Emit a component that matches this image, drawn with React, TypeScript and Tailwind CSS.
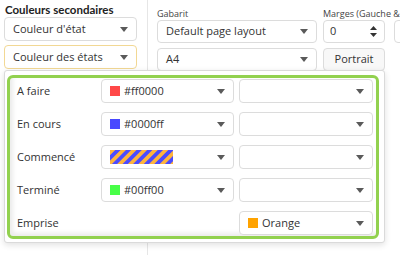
import React from 'react';

const font = { fontFamily: '"Open Sans", "Noto Sans", Arial, sans-serif' };

function Caret({ className = '' }: { className?: string }) {
  return (
    <svg width="8" height="5" viewBox="0 0 8 5" className={className}>
      <path d="M0 0h8L4 5z" fill="#5a5a5a" />
    </svg>
  );
}

function Select({
  children,
  className = '',
  focus = false,
}: {
  children?: React.ReactNode;
  className?: string;
  focus?: boolean;
}) {
  return (
    <div
      className={`flex items-center rounded-[4px] border bg-white pl-2 pr-[8px] ${
        focus ? 'border-[#f2d894]' : 'border-[#dcdcdc]'
      } ${className}`}
    >
      <div className="flex min-w-0 flex-1 items-center gap-[4px] whitespace-nowrap text-[11px] text-[#333]">
        {children}
      </div>
      <Caret />
    </div>
  );
}

function Swatch({ color }: { color: string }) {
  return <span className="h-[10px] w-[10px] shrink-0" style={{ background: color }} />;
}

function Stripes() {
  return (
    <svg width="63" height="14" viewBox="0 0 63 14" className="block">
      <defs>
        <pattern id="stripes" width="7.5" height="10" patternUnits="userSpaceOnUse" patternTransform="rotate(45)">
          <rect width="3.75" height="10" fill="#ffb43c" />
        </pattern>
      </defs>
      <rect width="63" height="14" fill="#4b4bff" />
      <rect width="63" height="14" fill="url(#stripes)" />
    </svg>
  );
}

const rows = [
  { label: 'A faire', swatch: '#ff4848', value: '#ff0000' },
  { label: 'En cours', swatch: '#4848ff', value: '#0000ff' },
  { label: 'Commencé', stripes: true },
  { label: 'Terminé', swatch: '#48ff48', value: '#00ff00' },
];

export default function App() {
  return (
    <div className="relative h-[255px] w-[400px] overflow-hidden bg-white" style={font}>
      <div className="flex h-full">
        {/* left: secondary colours */}
        <div className="flex w-[148px] shrink-0 flex-col border-r border-[#e6e6e6] pl-1 pr-[10px] pt-[2px]">
          <div
            className="whitespace-nowrap pl-px text-[11.5px] font-bold leading-[16px] text-[#222]"
            style={{ fontFamily: 'Lato, "Open Sans", sans-serif' }}
          >
            Couleurs secondaires
          </div>
          <Select className="mt-[-1px] h-[24px]">Couleur d'état</Select>
          <Select focus className="mt-[4px] h-[24px]">Couleur des états</Select>
        </div>

        {/* right: page setup */}
        <div className="flex flex-col pl-[9px] pt-[8px]">
          <div className="flex gap-[6px]">
            <div className="flex w-[160px] flex-col">
              <div className="text-[9px] leading-[12px] text-[#444]">Gabarit</div>
              <Select className="h-[23px]">Default page layout</Select>
            </div>
            <div className="flex w-[62px] flex-col">
              <div className="whitespace-nowrap text-[9px] leading-[12px] text-[#444]">Marges (Gauche &amp; Droite)</div>
              <div className="flex h-[23px] items-center rounded-[4px] border border-[#dcdcdc] bg-white pl-[6px] pr-[7px]">
                <span className="flex-1 text-[11px] text-[#333]">0</span>
                <div className="flex flex-col gap-[3px]">
                  <svg width="7" height="4" viewBox="0 0 7 4"><path d="M0 4h7L3.5 0z" fill="#333" /></svg>
                  <svg width="7" height="4" viewBox="0 0 7 4"><path d="M0 0h7L3.5 4z" fill="#333" /></svg>
                </div>
              </div>
            </div>
            <div className="ml-[3px] flex w-[40px] flex-col">
              <div className="h-[12px]" />
              <div className="h-[23px] rounded-[4px] border border-[#dcdcdc] bg-white" />
            </div>
          </div>
          <div className="mt-[5px] flex gap-[6px]">
            <Select className="h-[23px] w-[160px]">A4</Select>
            <div className="flex h-[23px] w-[62px] items-center justify-center rounded-[4px] border border-[#dcdcdc] bg-[#f8f8f8] text-[11px] text-[#333]">
              Portrait
            </div>
          </div>
        </div>
      </div>

      {/* dropdown panel over the page */}
      <div className="absolute left-[4px] top-[70px] h-[173px] w-[381px] rounded-[3px] border border-[#dadada] bg-white pb-[3px] pl-[2px] pr-[5px] pt-[4px] shadow-[0_2px_6px_rgba(0,0,0,0.12)]">
        <div className="grid h-full grid-cols-[86px_133px_134px] content-start gap-x-[5px] gap-y-[9px] rounded-[6px] border-[3px] border-[#92d14f] pt-[1px] shadow-[inset_3px_-3px_4px_rgba(0,0,0,0.08)]">
          {rows.map((r) => (
            <React.Fragment key={r.label}>
              <div className="flex h-[24px] items-center pl-[7px] text-[11px] text-[#333]">{r.label}</div>
              <Select className="h-[24px]">
                {r.stripes ? (
                  <Stripes />
                ) : (
                  <>
                    <Swatch color={r.swatch!} />
                    <span>{r.value}</span>
                  </>
                )}
              </Select>
              <Select className="h-[24px]" />
            </React.Fragment>
          ))}
          <div className="flex h-[24px] items-center pl-[7px] text-[11px] text-[#333]">Emprise</div>
          <div />
          <Select className="h-[24px]">
            <Swatch color="#ffa300" />
            <span>Orange</span>
          </Select>
        </div>
      </div>
    </div>
  );
}
